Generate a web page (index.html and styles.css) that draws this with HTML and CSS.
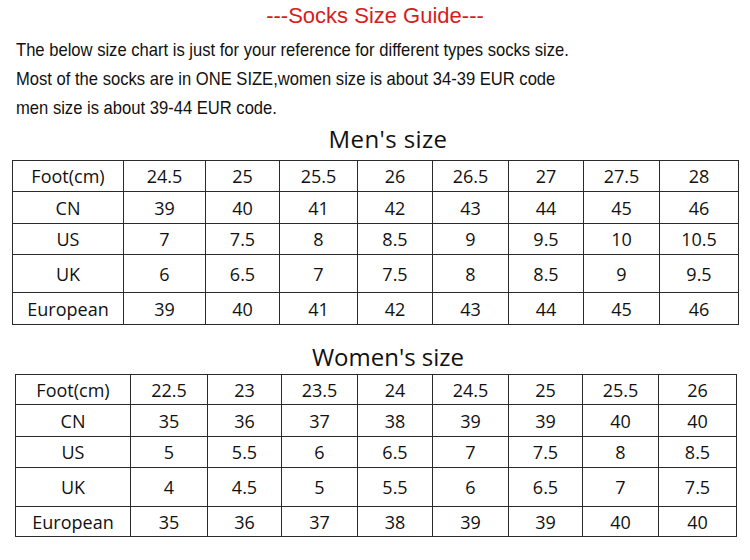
FILE: index.html
```html
<!DOCTYPE html>
<html>
<head>
<meta charset="utf-8">
<link rel="stylesheet" href="styles.css">
</head>
<body>
<div class="page">
  <h1 class="guide-title">---Socks Size Guide---</h1>
  <div class="intro">
    <p>The below size chart is just for your reference for different types socks size.</p>
    <p>Most of the socks are in ONE SIZE,women size is about 34-39 EUR code</p>
    <p>men size is about 39-44 EUR code.</p>
  </div>

  <h2 class="chart-title men-title">Men's size</h2>
  <table class="chart men">
    <colgroup>
      <col class="c1"><col class="c2"><col class="c3"><col class="c4"><col class="c5"><col class="c6"><col class="c7"><col class="c8"><col class="c9">
    </colgroup>
    <tr class="r1"><td>Foot(cm)</td><td>24.5</td><td>25</td><td>25.5</td><td>26</td><td>26.5</td><td>27</td><td>27.5</td><td>28</td></tr>
    <tr class="r2"><td>CN</td><td>39</td><td>40</td><td>41</td><td>42</td><td>43</td><td>44</td><td>45</td><td>46</td></tr>
    <tr class="r3"><td>US</td><td>7</td><td>7.5</td><td>8</td><td>8.5</td><td>9</td><td>9.5</td><td>10</td><td>10.5</td></tr>
    <tr class="r4"><td>UK</td><td>6</td><td>6.5</td><td>7</td><td>7.5</td><td>8</td><td>8.5</td><td>9</td><td>9.5</td></tr>
    <tr class="r5"><td>European</td><td>39</td><td>40</td><td>41</td><td>42</td><td>43</td><td>44</td><td>45</td><td>46</td></tr>
  </table>

  <h2 class="chart-title women-title">Women's size</h2>
  <table class="chart women">
    <colgroup>
      <col class="c1"><col class="c2"><col class="c3"><col class="c4"><col class="c5"><col class="c6"><col class="c7"><col class="c8"><col class="c9">
    </colgroup>
    <tr class="r1"><td>Foot(cm)</td><td>22.5</td><td>23</td><td>23.5</td><td>24</td><td>24.5</td><td>25</td><td>25.5</td><td>26</td></tr>
    <tr class="r2"><td>CN</td><td>35</td><td>36</td><td>37</td><td>38</td><td>39</td><td>39</td><td>40</td><td>40</td></tr>
    <tr class="r3"><td>US</td><td>5</td><td>5.5</td><td>6</td><td>6.5</td><td>7</td><td>7.5</td><td>8</td><td>8.5</td></tr>
    <tr class="r4"><td>UK</td><td>4</td><td>4.5</td><td>5</td><td>5.5</td><td>6</td><td>6.5</td><td>7</td><td>7.5</td></tr>
    <tr class="r5"><td>European</td><td>35</td><td>36</td><td>37</td><td>38</td><td>39</td><td>39</td><td>40</td><td>40</td></tr>
  </table>
</div>
</body>
</html>
```

FILE: styles.css
```css
html, body {
  margin: 0;
  padding: 0;
  background: #ffffff;
}

.page {
  width: 750px;
  height: 560px;
  overflow: hidden;
  display: flex;
  flex-direction: column;
}

.guide-title {
  margin: 3px 0 0 0;
  font-family: "Liberation Sans", Arial, sans-serif;
  font-weight: normal;
  font-size: 22px;
  line-height: 26px;
  color: #d71c1c;
  text-align: center;
}

.intro {
  margin: 6px 0 0 16px;
  height: 89px;
  font-family: "Liberation Sans", Arial, sans-serif;
  font-size: 19px;
  line-height: 29px;
  color: #111;
  transform: scaleX(0.873);
  transform-origin: left top;
}

.intro p {
  margin: 0;
  white-space: nowrap;
}

.chart-title {
  margin: 0;
  font-family: "Open Sans", sans-serif;
  font-weight: normal;
  font-size: 24px;
  line-height: 30px;
  color: #111;
  text-align: center;
  padding-left: 26px;
}

.men-title {
  margin-top: 0;
  letter-spacing: 0.4px;
}

.women-title {
  margin-top: 17px;
}

.chart {
  border-collapse: collapse;
  table-layout: fixed;
  font-family: "Open Sans", sans-serif;
  font-size: 18px;
  color: #111;
}

.chart td {
  border: 1px solid #2a2a2a;
  text-align: center;
  vertical-align: middle;
  padding: 0;
  line-height: 20px;
  white-space: nowrap;
}

.men {
  width: 726px;
  margin: 6px 0 0 12px;
}

.women {
  width: 721px;
  margin: 2px 0 0 15px;
}

.men .c1 { width: 111px; }
.men .c2 { width: 82px; }
.men .c3 { width: 74px; }
.men .c4 { width: 78px; }
.men .c5 { width: 75px; }
.men .c6 { width: 76px; }
.men .c7 { width: 75px; }
.men .c8 { width: 76px; }
.men .c9 { width: 79px; }

.women .c1 { width: 115px; }
.women .c2 { width: 77px; }
.women .c3 { width: 74px; }
.women .c4 { width: 76px; }
.women .c5 { width: 75px; }
.women .c6 { width: 76px; }
.women .c7 { width: 74px; }
.women .c8 { width: 76px; }
.women .c9 { width: 78px; }

.men .r1 td { height: 30px; }
.men .r2 td { height: 31px; }
.men .r3 td { height: 30px; }
.men .r4 td { height: 37px; }
.men .r5 td { height: 31px; }

.women .r1 td { height: 29px; }
.women .r2 td { height: 31px; }
.women .r3 td { height: 30px; }
.women .r4 td { height: 38px; }
.women .r5 td { height: 29px; }
```
